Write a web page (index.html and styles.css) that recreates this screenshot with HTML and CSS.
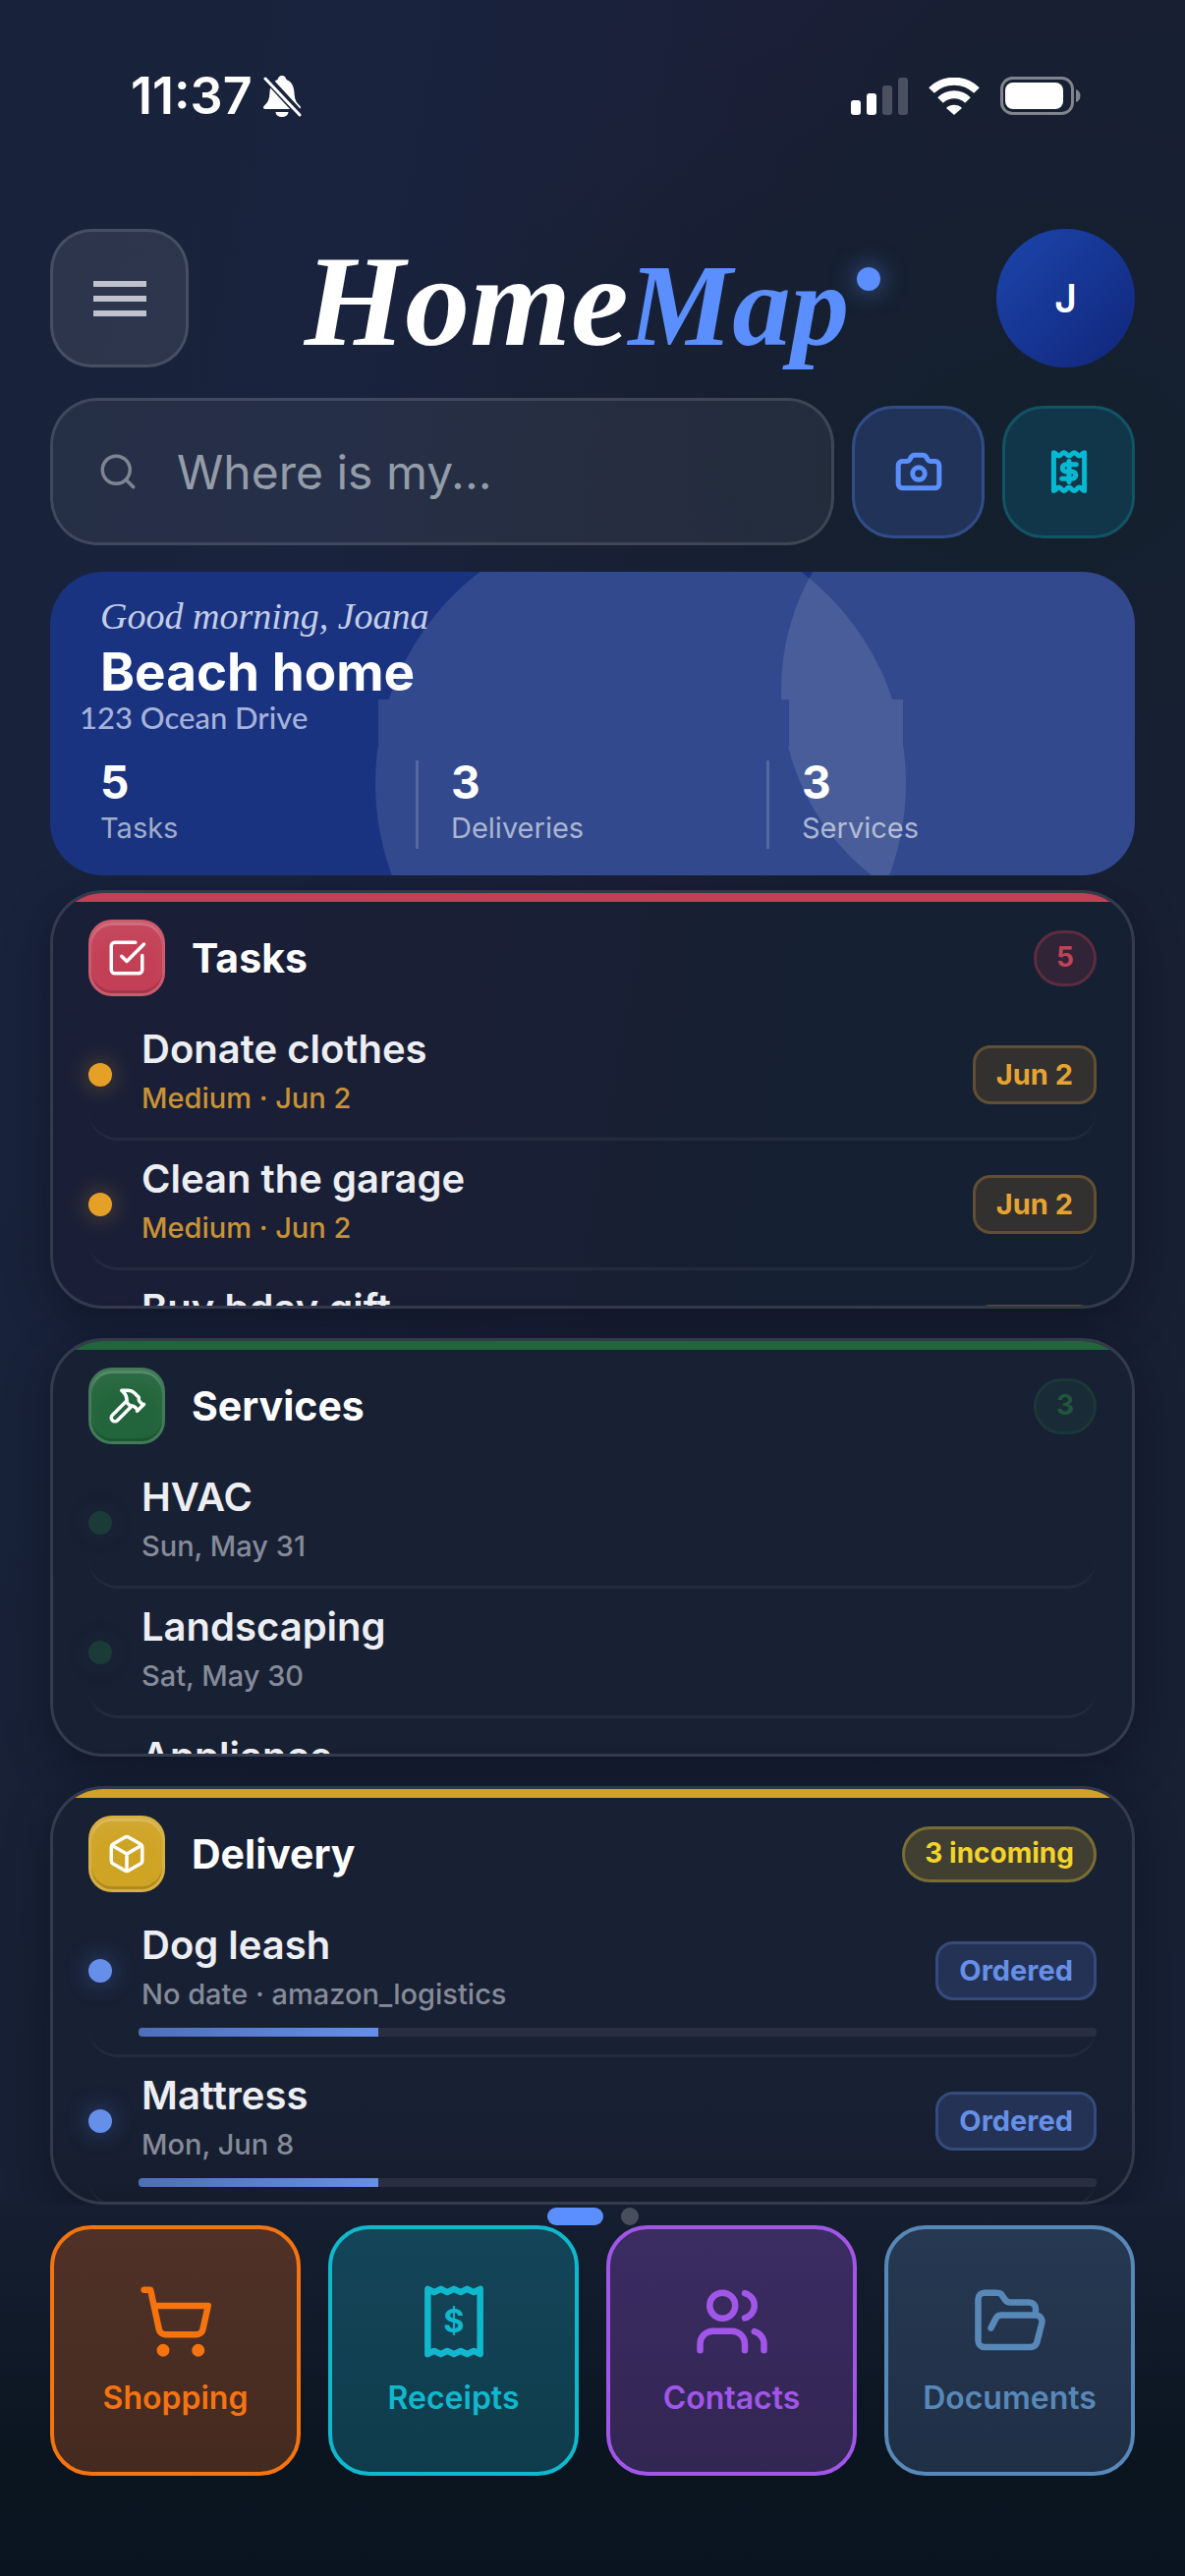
FILE: index.html
```
<!DOCTYPE html>
<html lang="en">
<head>
  <meta charset="UTF-8" />
  <meta name="viewport" content="width=device-width, initial-scale=1.0"/>
  <title>HomeMap</title>
  <link rel="stylesheet" href="styles.css">
</head>
<body>

  <div class="status-bar">
    <div class="status-left">
      <span class="time">11:37</span>
      <svg class="bell" viewBox="0 0 40 42">
        <path d="M20 0c2.500 0 4 2 4.500 4C30 6 32 11 32.500 17c.4 7 1.500 10 6 14 1 1.500.5 3-1.500 3H3c-2 0-2.500-1.500-1.500-3 4.500-4 5.600-7 6-14C8 11 10 6 15.500 4 16 2 17.500 0 20 0zM13.500 37h13c0 3-3 5-6.500 5s-6.500-2-6.500-5z" fill="#fff"/>
        <path d="M3 1l36 39" stroke="#19233d" stroke-width="8"/>
        <path d="M3 3l35 37" stroke="#fff" stroke-width="3"/>
      </svg>
    </div>
    <div class="status-right">
      <svg class="signal" viewBox="0 0 58 38">
        <g fill="#fff">
          <rect x="0" y="23" width="10" height="15" rx="3"/>
          <rect x="16" y="16" width="10" height="22" rx="3"/>
          <rect x="32" y="8" width="10" height="30" rx="3" opacity=".22"/>
          <rect x="48" y="0" width="10" height="38" rx="3" opacity=".22"/>
        </g>
      </svg>
      <svg class="wifi" viewBox="0 0 52 38">
        <g stroke="#fff" stroke-width="8">
          <path d="M3 13a33 33 0 0 1 46 0"/>
          <path d="M12 23a20 20 0 0 1 28 0"/>
        </g>
        <path d="M18 31a11.500 11.500 0 0 1 16 0l-8 7z" fill="#fff"/>
      </svg>
      <svg class="battery" viewBox="0 0 82 39">
        <rect x="1.500" y="1.500" width="72" height="36" rx="11" stroke="#fff" stroke-opacity=".45" stroke-width="3"/>
        <rect x="5" y="6" width="59" height="27" rx="8" fill="#fff"/>
        <path d="M77 13c3 1 4.500 3.500 4.500 6.500S80 25 77 26z" fill="#fff" fill-opacity=".45"/>
      </svg>
    </div>
  </div>

  <main class="page">
    <header class="top">
      <button class="menu-btn" aria-label="Menu"><span></span><span></span><span></span></button>
      <h1 class="logo">Home<em>Map</em><i class="logo-dot"></i></h1>
      <button class="avatar">J</button>
    </header>

    <form class="search-row">
      <label class="search">
        <svg viewBox="0 0 24 24"><circle cx="11" cy="11" r="8"/><path d="M21 21l-4.300-4.300"/></svg>
        <input type="text" placeholder="Where is my..." aria-label="Where is my..." />
      </label>
      <button type="button" class="tool camera" aria-label="Camera">
        <svg viewBox="0 0 24 24"><path d="M14 4a2 2 0 0 1 1.760 1.050l.480.900A2 2 0 0 0 18 7h2a2 2 0 0 1 2 2v9a2 2 0 0 1-2 2H4a2 2 0 0 1-2-2V9a2 2 0 0 1 2-2h2a2 2 0 0 0 1.760-1.050l.480-.900A2 2 0 0 1 10 4z"/><circle cx="12" cy="13" r="3"/></svg>
      </button>
      <button type="button" class="tool receipt" aria-label="Receipt">
        <svg viewBox="0 0 24 24"><path d="M4.500 2.700c1.250 0 1.250 1.600 2.500 1.600s1.250-1.600 2.500-1.600 1.250 1.600 2.500 1.600 1.250-1.600 2.500-1.600 1.250 1.600 2.500 1.600 1.250-1.600 2.500-1.600v18.600c-1.250 0-1.250-1.600-2.500-1.600s-1.250 1.600-2.500 1.600-1.250-1.600-2.500-1.600-1.250 1.600-2.500 1.600-1.250-1.600-2.500-1.600-1.250 1.600-2.500 1.600z"/><path d="M15.500 8.500h-5a1.750 1.750 0 0 0 0 3.500h3a1.750 1.750 0 0 1 0 3.500h-5M12 7v10"/></svg>
      </button>
    </form>

    <section class="hero">
      <svg class="hero-shapes" viewBox="0 0 1104 309" preserveAspectRatio="xMidYMid slice">
        <clipPath id="bands"><rect width="1104" height="130"/><rect y="178" width="1104" height="131"/></clipPath>
        <g fill="#fff" fill-opacity=".11">
          <circle cx="601" cy="215" r="270" clip-path="url(#bands)"/>
          <rect x="334" y="130" width="534" height="48"/>
          <circle cx="984" cy="120" r="240" clip-path="url(#bands)"/>
          <rect x="752" y="130" width="352" height="48"/>
        </g>
      </svg>
      <div class="hero-text">
        <p class="greeting">Good morning, Joana</p>
        <h2>Beach home</h2>
        <p class="address">123 Ocean Drive</p>
        <div class="stats">
          <div class="stat"><strong>5</strong><span>Tasks</span></div>
          <div class="stat"><strong>3</strong><span>Deliveries</span></div>
          <div class="stat"><strong>3</strong><span>Services</span></div>
        </div>
      </div>
    </section>

    <section class="card tasks">
      <div class="card-head">
        <span class="card-icon"><svg viewBox="0 0 24 24"><path d="M21 10.500V19a2 2 0 0 1-2 2H5a2 2 0 0 1-2-2V5a2 2 0 0 1 2-2h12"/><path d="M9 11l3 3L22 4"/></svg></span>
        <h3>Tasks</h3>
        <span class="count">5</span>
      </div>
      <ul>
        <li>
          <div class="row"><i class="dot"></i><div class="text"><b>Donate clothes</b><small>Medium · Jun 2</small></div><span class="tag">Jun 2</span></div>
        </li>
        <li>
          <div class="row"><i class="dot"></i><div class="text"><b>Clean the garage</b><small>Medium · Jun 2</small></div><span class="tag">Jun 2</span></div>
        </li>
        <li>
          <div class="row"><i class="dot"></i><div class="text"><b>Buy bday gift</b><small>Medium · Jun 2</small></div><span class="tag">Jun 2</span></div>
        </li>
      </ul>
    </section>

    <section class="card services">
      <div class="card-head">
        <span class="card-icon"><svg viewBox="0 0 24 24"><path d="m15 12-8.400 8.400a2.100 2.100 0 1 1-3-3L12 9"/><path d="m18 15 4-4"/><path d="m21.500 11.500-1.900-1.900A2 2 0 0 1 19 8.200V7l-2.300-2.300a6 6 0 0 0-4.200-1.700H9l.9.8A6.200 6.200 0 0 1 12 8.400V10l2 2h1.200a2 2 0 0 1 1.400.6l1.900 1.900"/></svg></span>
        <h3>Services</h3>
        <span class="count">3</span>
      </div>
      <ul>
        <li>
          <div class="row"><i class="dot"></i><div class="text"><b>HVAC</b><small>Sun, May 31</small></div></div>
        </li>
        <li>
          <div class="row"><i class="dot"></i><div class="text"><b>Landscaping</b><small>Sat, May 30</small></div></div>
        </li>
        <li>
          <div class="row"><i class="dot"></i><div class="text"><b>Appliance</b><small>&nbsp;</small></div></div>
        </li>
      </ul>
    </section>

    <section class="card delivery">
      <div class="card-head">
        <span class="card-icon"><svg viewBox="0 0 24 24"><path d="M21 8a2 2 0 0 0-1-1.730l-7-4a2 2 0 0 0-2 0l-7 4A2 2 0 0 0 3 8v8a2 2 0 0 0 1 1.730l7 4a2 2 0 0 0 2 0l7-4A2 2 0 0 0 21 16z"/><path d="m3.300 7 8.700 5 8.700-5M12 22V12"/></svg></span>
        <h3>Delivery</h3>
        <span class="count">3 incoming</span>
      </div>
      <ul>
        <li>
          <div class="row"><i class="dot"></i><div class="text"><b>Dog leash</b><small>No date · amazon_logistics</small></div><span class="tag">Ordered</span></div>
          <div class="progress"><div style="width: 25%"></div></div>
        </li>
        <li>
          <div class="row"><i class="dot"></i><div class="text"><b>Mattress</b><small>Mon, Jun 8</small></div><span class="tag">Ordered</span></div>
          <div class="progress"><div style="width: 25%"></div></div>
        </li>
      </ul>
    </section>
  </main>

  <footer>
    <div class="pager"><span class="active"></span><span></span></div>
    <nav>
      <a href="#shopping" class="shopping">
        <svg viewBox="0 0 24 24"><circle cx="8" cy="21" r="1"/><circle cx="19" cy="21" r="1"/><path d="M2.050 2.050h2l2.660 12.420a2 2 0 0 0 2 1.580h9.780a2 2 0 0 0 1.950-1.570l1.650-7.430H5.120"/></svg>
        Shopping
      </a>
      <a href="#receipts" class="receipts">
        <svg viewBox="0 0 24 24"><path d="M3.800 1.800v20.400l2-1 2.100 1 2-1 2.100 1 2.100-1 2 1 2.100-1 2 1V1.800l-2 1-2.100-1-2 1-2.100-1-2.100 1-2-1-2.100 1z"/><text x="12" y="15.500">$</text></svg>
        Receipts
      </a>
      <a href="#contacts" class="contacts">
        <svg viewBox="0 0 24 24"><path d="M16 21v-2a4 4 0 0 0-4-4H6a4 4 0 0 0-4 4v2"/><circle cx="9" cy="7" r="4"/><path d="M22 21v-2a4 4 0 0 0-3-3.870M16 3.130a4 4 0 0 1 0 7.750"/></svg>
        Contacts
      </a>
      <a href="#documents" class="documents">
        <svg viewBox="0 0 24 24"><path d="m6 14 1.500-2.900A2 2 0 0 1 9.240 10H20a2 2 0 0 1 1.940 2.500l-1.540 6a2 2 0 0 1-1.950 1.500H4a2 2 0 0 1-2-2V5a2 2 0 0 1 2-2h3.900a2 2 0 0 1 1.690.9l.81 1.200a2 2 0 0 0 1.670.9H18a2 2 0 0 1 2 2v2"/></svg>
        Documents
      </a>
    </nav>
  </footer>

</body>
</html>
```
FILE: styles.css
```
:root {
  --text: #fff;
  --red: #c33f55;
  --green: #22643b;
  --yellow: #cfa323;
  --blue: #5b8fff;
  --amber: #e5a028;
  --line: rgba(255, 255, 255, 0.12);
}

* {
  margin: 0;
  padding: 0;
  box-sizing: border-box;
}

body {
  min-height: 100vh;
  display: flex;
  flex-direction: column;
  font-family: Inter, "Liberation Sans", sans-serif;
  color: var(--text);
  background:
    radial-gradient(ellipse 700px 500px at 88% 18%, #15202f 20%, transparent),
    linear-gradient(transparent 40%, #172034 80%),
    linear-gradient(100deg, #18223a 0%, #19233d 25%, #1b1f38 48%, #181f33 60%, #182034 100%);
}

button {
  font: inherit;
  color: inherit;
  cursor: pointer;
}

svg {
  display: block;
  fill: none;
  stroke-linecap: round;
  stroke-linejoin: round;
}

/* Status bar */
.status-bar {
  height: 233px;
  padding: 66px 106px 0 133px;
  display: flex;
  justify-content: space-between;
  align-items: flex-start;
}

.status-left,
.status-right {
  height: 63px;
  display: flex;
  align-items: center;
}

.status-left {
  gap: 10px;
}

.status-right {
  gap: 21px;
}

.time {
  font-size: 52px;
  font-weight: 600;
}

.bell {
  width: 40px;
  height: 42px;
}

.signal {
  width: 58px;
  height: 38px;
}

.wifi {
  width: 52px;
  height: 38px;
  stroke-linecap: butt;
}

.battery {
  width: 82px;
  height: 39px;
}

/* Header */
.page {
  padding: 0 51px;
}

.top {
  display: flex;
  justify-content: space-between;
  align-items: center;
}

.menu-btn {
  width: 141px;
  height: 141px;
  display: flex;
  flex-direction: column;
  align-items: center;
  justify-content: center;
  gap: 9px;
  background: rgba(255, 255, 255, 0.09);
  border: 3px solid var(--line);
  border-radius: 42px;
}

.menu-btn span {
  width: 54px;
  height: 6px;
  background: #bfc1cc;
}

.logo {
  height: 141px;
  display: flex;
  align-items: baseline;
  font: italic bold 132px/147px "Liberation Serif", serif;
}

.logo em {
  font-size: 119px;
  line-height: 120px;
  color: var(--blue);
}

.logo-dot {
  align-self: flex-start;
  width: 24px;
  height: 24px;
  margin: 39px 0 0 8px;
  border-radius: 50%;
  background: var(--blue);
  box-shadow: 0 0 24px rgba(91, 143, 255, 0.6);
}

.avatar {
  width: 141px;
  height: 141px;
  border: none;
  border-radius: 50%;
  font-size: 39px;
  font-weight: 600;
  background: linear-gradient(135deg, #1c45ad, #112679);
}

/* Search */
.search-row {
  display: flex;
  align-items: center;
  gap: 18px;
  margin-top: 31px;
}

.search {
  flex: 1;
  min-width: 0;
  height: 150px;
  padding: 0 45px;
  display: flex;
  align-items: center;
  gap: 39px;
  background: rgba(255, 255, 255, 0.06);
  border: 3px solid var(--line);
  border-radius: 48px;
}

.search svg {
  width: 42px;
  height: 42px;
  stroke: #7e8592;
  stroke-width: 2;
}

.search input {
  flex: 1;
  min-width: 0;
  font: 48px Inter, "Liberation Sans", sans-serif;
  color: var(--text);
  background: none;
  border: none;
  outline: none;
}

.search input::placeholder {
  color: #949ca8;
}

.tool {
  width: 135px;
  height: 135px;
  display: flex;
  align-items: center;
  justify-content: center;
  border: 3px solid;
  border-radius: 42px;
}

.tool svg {
  width: 50px;
  height: 50px;
  stroke-width: 2.4;
}

.camera {
  background: #213358;
  border-color: #314d88;
}

.camera svg {
  stroke: var(--blue);
}

.receipt {
  background: #123649;
  border-color: #115465;
}

.receipt svg {
  stroke: #06b9d3;
}

/* Hero */
.hero {
  position: relative;
  overflow: hidden;
  margin-top: 27px;
  border-radius: 54px;
  background: #193380;
}

.hero-shapes {
  position: absolute;
  top: 0;
  left: 0;
  width: 100%;
  height: 100%;
}

.hero-text {
  position: relative;
  padding: 21px 18px 27px 51px;
}

.greeting {
  font: italic 38px/48px "Liberation Serif", serif;
  color: #c5cde8;
}

.hero h2 {
  font-size: 53px;
  line-height: 66px;
  font-weight: 700;
}

.address {
  margin-left: -21px;
  font: 500 31px/27px Lato, sans-serif;
  color: #a6b2da;
}

.stats {
  display: flex;
  margin-top: 30px;
}

.stat {
  flex: 1 1 0;
  height: 90px;
}

.stat + .stat {
  padding-left: 33px;
  border-left: 3px solid rgba(255, 255, 255, 0.17);
}

.stat strong,
.stat span {
  display: block;
}

.stat strong {
  font-size: 46px;
  line-height: 45px;
}

.stat span {
  margin-top: 6px;
  font-size: 29px;
  line-height: 36px;
  color: rgba(255, 255, 255, 0.6);
}

/* Cards */
.card {
  height: 426px;
  overflow: hidden;
  margin-top: 30px;
  padding: 0 36px;
  border: 3px solid var(--line);
  border-radius: 54px;
  background: #182034;
  box-shadow: 0 12px 42px rgba(10, 14, 28, 0.5);
}

.hero + .card {
  margin-top: 15px;
  background: linear-gradient(100deg, #1a1f38, #191f34 50%, #152032 70%);
}

.card.delivery {
  background: linear-gradient(#182034 75%, #151d2d);
}

.card-head {
  display: flex;
  align-items: center;
  margin: 0 -36px 15px;
  padding: 18px 36px 0;
  border-top: 9px solid;
}

.tasks .card-head {
  border-color: var(--red);
}

.services .card-head {
  border-color: var(--green);
}

.delivery .card-head {
  border-color: var(--yellow);
}

.card-icon {
  width: 78px;
  height: 78px;
  display: flex;
  align-items: center;
  justify-content: center;
  border: 3px solid rgba(255, 255, 255, 0.15);
  border-radius: 24px;
  box-shadow: inset 0 3px 0 rgba(255, 255, 255, 0.2), inset 0 -3px 0 rgba(0, 0, 0, 0.15), inset 0 18px 18px rgba(255, 255, 255, 0.05);
}

.tasks .card-icon {
  background-color: var(--red);
}

.services .card-icon {
  background-color: var(--green);
}

.delivery .card-icon {
  background-color: var(--yellow);
}

.card-icon svg {
  width: 42px;
  height: 42px;
  stroke: #fff;
  stroke-width: 2;
}

.card h3 {
  flex: 1;
  margin-left: 27px;
  font-size: 41px;
  line-height: 54px;
  font-weight: 700;
}

.count {
  padding: 9px 20px 12px;
  border: 3px solid;
  border-radius: 30px;
  font-size: 28px;
  line-height: 30px;
  font-weight: 700;
}

.tasks .count {
  color: #c2425b;
  background: #312437;
  border-color: #5d2c40;
}

.services .count {
  color: #22563b;
  background: #182b36;
  border-color: #1b3838;
}

.delivery .count {
  color: #f3d42c;
  background: #403f31;
  border-color: #796d34;
}

.card ul {
  list-style: none;
}

.card li {
  padding: 18px 0;
  border-bottom: 3px solid rgba(255, 255, 255, 0.05);
  border-radius: 0 0 30px 30px;
}

.row {
  display: flex;
  align-items: center;
}

.dot {
  width: 24px;
  height: 24px;
  border-radius: 50%;
}

.tasks .dot {
  background: var(--amber);
  box-shadow: 0 0 24px rgba(229, 160, 40, 0.4);
}

.services .dot {
  background: #1b3b38;
  box-shadow: 0 0 24px rgba(34, 100, 59, 0.2);
}

.delivery .dot {
  background: #668fe9;
  box-shadow: 0 0 24px rgba(91, 143, 255, 0.4);
}

.text {
  flex: 1;
  margin-left: 30px;
}

.text b,
.text small {
  display: block;
}

.text b {
  font-size: 40px;
  line-height: 42px;
  font-weight: 600;
  color: #edeef2;
}

.text small {
  margin-top: 6px;
  font-size: 29px;
  line-height: 45px;
  font-weight: 500;
  color: #868b98;
}

.tasks small {
  color: #c99335;
}

.tag {
  padding: 9px 21px;
  border: 3px solid;
  border-radius: 18px;
  font-size: 29px;
  line-height: 36px;
  font-weight: 700;
}

.tasks .tag {
  color: #e5a432;
  background: #323130;
  border-color: #624f33;
}

.delivery .tag {
  color: #668fe6;
  background: #243255;
  border-color: #344b7c;
}

.progress {
  height: 9px;
  margin: 12px 0 0 51px;
  overflow: hidden;
  border-radius: 4px;
  background: #292f41;
}

.progress div {
  height: 100%;
  background: linear-gradient(90deg, #4e6fb8, #668fe9);
}

/* Footer */
footer {
  flex: 1;
  position: relative;
  padding: 3px 51px 102px;
  background: linear-gradient(#161f31, #0a1520 260px, #0a1420);
}

.pager {
  display: flex;
  justify-content: center;
  gap: 18px;
}

.pager span {
  width: 18px;
  height: 18px;
  border-radius: 9px;
  background: #484e5b;
}

.pager .active {
  width: 57px;
  background: var(--blue);
}

nav {
  display: grid;
  grid-template-columns: repeat(4, 1fr);
  gap: 28px;
}

nav a {
  height: 255px;
  display: flex;
  flex-direction: column;
  align-items: center;
  justify-content: center;
  gap: 18px;
  border: 4px solid;
  border-radius: 42px;
  font-size: 32px;
  line-height: 42px;
  font-weight: 600;
  text-decoration: none;
}

nav svg {
  width: 78px;
  height: 78px;
  stroke: currentColor;
  stroke-width: 2;
}

nav text {
  font-size: 10px;
  font-weight: 700;
  text-anchor: middle;
  fill: currentColor;
  stroke: none;
}

.shopping {
  color: #f5740f;
  background: linear-gradient(#4f3128, #452a20);
}

.receipts {
  color: #10b8ce;
  background: linear-gradient(#144558, #0e3c4c);
}

.contacts {
  color: #a156e8;
  background: linear-gradient(#3b2c62, #322653);
}

.documents {
  color: #5888b8;
  background: linear-gradient(#273852, #1e2f46);
}
```
